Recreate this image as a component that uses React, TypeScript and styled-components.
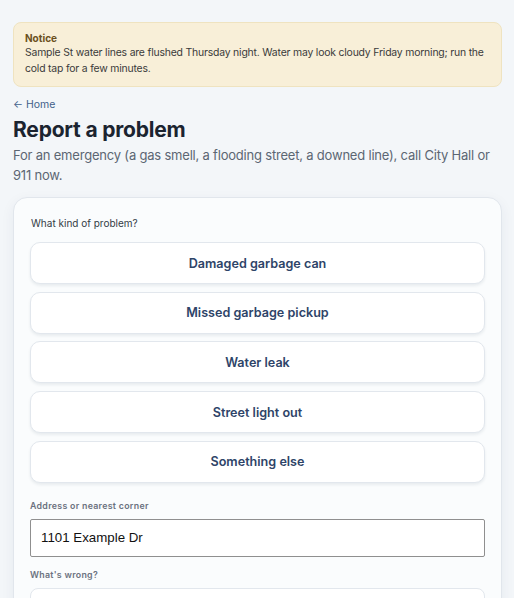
import styled, { createGlobalStyle } from 'styled-components';

const GlobalStyle = createGlobalStyle`
  html, body {
    margin: 0;
    padding: 0;
    background: #f3f6f9;
  }
  body {
    font-family: Inter, "Noto Sans", "Liberation Sans", sans-serif;
    color: #1b2430;
  }
  * { box-sizing: border-box; }
`;

const Page = styled.div`
  padding: 22px 12px 0 13px;
`;

const Notice = styled.div`
  background: #f8efd8;
  border: 1px solid #efe3c0;
  border-radius: 8px;
  padding: 8px 11px 9px;
`;

const NoticeTitle = styled.div`
  font-size: 10px;
  font-weight: 700;
  color: #6b5020;
  line-height: 14px;
`;

const NoticeText = styled.div`
  font-size: 10.4px;
  letter-spacing: -0.18px;
  line-height: 16px;
  color: #3a3a3a;
`;

const BackLink = styled.a`
  display: block;
  margin-top: 11px;
  font-size: 10.5px;
  color: #3f5f8a;
  text-decoration: none;
  line-height: 14px;
`;

const Title = styled.h1`
  margin: 4px 0 0;
  font-size: 21px;
  font-weight: 700;
  letter-spacing: -0.2px;
  line-height: 28px;
  color: #1b2430;
`;

const Lead = styled.p`
  margin: 2px 0 0;
  font-size: 13px;
  letter-spacing: -0.2px;
  line-height: 19.5px;
  color: #5c6673;
  padding-right: 4px;
`;

const Card = styled.div`
  margin-top: 12px;
  background: #fafcfd;
  border: 1px solid #e1e6ec;
  border-radius: 14px;
  padding: 18px 16px 20px;
  box-shadow: 0 4px 14px rgba(30, 50, 80, 0.06);
`;

const Question = styled.div`
  font-size: 10px;
  color: #333b45;
  line-height: 14px;
  padding-left: 1px;
`;

const Options = styled.div`
  margin-top: 12px;
  display: flex;
  flex-direction: column;
  gap: 7.7px;
`;

const Option = styled.button`
  height: 42px;
  width: 100%;
  background: #ffffff;
  border: 1px solid #e2e7ed;
  border-radius: 10px;
  box-shadow: 0 2px 3px rgba(30, 50, 80, 0.08);
  font-family: inherit;
  font-size: 12.6px;
  font-weight: 600;
  color: #2e4468;
  cursor: pointer;
`;

const FieldLabel = styled.label<{ $top: number }>`
  display: block;
  margin-top: ${(p) => p.$top}px;
  font-size: 8.8px;
  font-weight: 600;
  letter-spacing: 0.3px;
  color: #6b7280;
  line-height: 12px;
`;

const TextInput = styled.input`
  display: block;
  margin-top: 7px;
  width: 100%;
  height: 38px;
  border: 1px solid #8f8f8f;
  border-radius: 2px;
  padding: 0 10px;
  font-family: "Liberation Sans", Arial, sans-serif;
  font-size: 13.3px;
  color: #111;
  background: #fff;
`;

const TextArea = styled.textarea`
  display: block;
  margin-top: 7px;
  width: 100%;
  height: 80px;
  border: 1px solid #e2e7ed;
  border-radius: 8px;
  background: #fff;
  resize: none;
`;

const problems = [
  'Damaged garbage can',
  'Missed garbage pickup',
  'Water leak',
  'Street light out',
  'Something else',
];

export default function App() {
  return (
    <>
      <GlobalStyle />
      <Page>
        <Notice>
          <NoticeTitle>Notice</NoticeTitle>
          <NoticeText>
            Sample St water lines are flushed Thursday night. Water may look cloudy Friday morning; run the
            cold tap for a few minutes.
          </NoticeText>
        </Notice>
        <BackLink href="#">← Home</BackLink>
        <Title>Report a problem</Title>
        <Lead>
          For an emergency (a gas smell, a flooding street, a downed line), call City Hall or 911 now.
        </Lead>
        <Card>
          <Question>What kind of problem?</Question>
          <Options>
            {problems.map((p) => (
              <Option key={p} type="button">{p}</Option>
            ))}
          </Options>
          <FieldLabel $top={17}>Address or nearest corner</FieldLabel>
          <TextInput defaultValue="1101 Example Dr" />
          <FieldLabel $top={12}>What's wrong?</FieldLabel>
          <TextArea />
        </Card>
      </Page>
    </>
  );
}
